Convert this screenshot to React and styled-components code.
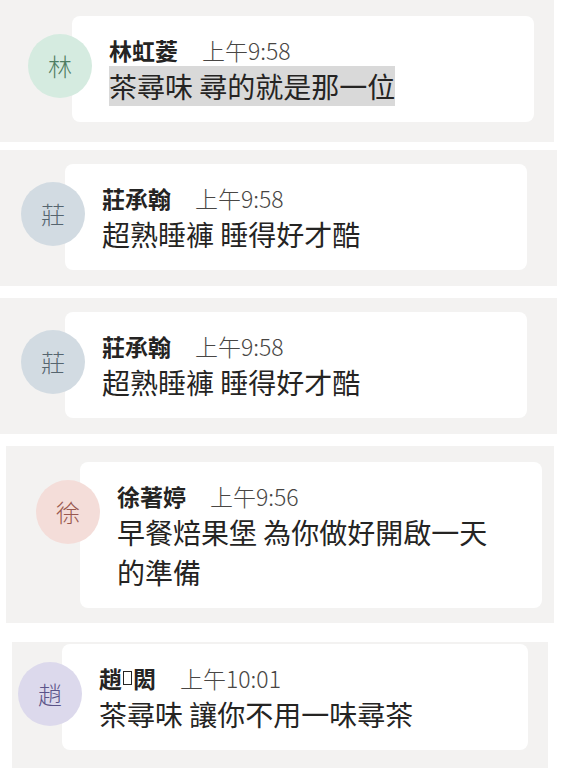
import React from "react";
import styled, { createGlobalStyle } from "styled-components";

const Global = createGlobalStyle`
  html, body { margin: 0; padding: 0; background: #ffffff; }
  body { font-family: "Noto Sans CJK TC", "Noto Sans", sans-serif; color: #252423; }
`;

const Page = styled.div`
  display: flex;
  flex-direction: column;
  width: 562px;
`;

const Panel = styled.section`
  display: flex;
  align-items: flex-start;
  box-sizing: border-box;
  background: #f3f2f1;
  width: ${(p) => p.$w}px;
  margin-top: ${(p) => p.$mt}px;
  margin-left: ${(p) => p.$ml}px;
  padding: ${(p) => p.$pad};
`;

const Avatar = styled.div`
  position: relative;
  z-index: 1;
  flex: 0 0 64px;
  width: 64px;
  height: 64px;
  margin-top: 18px;
  margin-right: -20px;
  border-radius: 50%;
  display: flex;
  align-items: center;
  justify-content: center;
  background: ${(p) => p.$bg};
  color: ${(p) => p.$fg};
  font-size: 24px;
  font-weight: 300;
  line-height: 1;
`;

const Card = styled.div`
  flex: 1;
  box-sizing: border-box;
  background: #ffffff;
  border-radius: 8px;
  padding: 18px 40px 16px 37px;
`;

const Header = styled.div`
  display: flex;
  align-items: baseline;
  gap: 24px;
  height: 32px;
  line-height: 32px;
  font-size: 23px;
`;

const Name = styled.span`
  font-weight: 700;
  color: #252423;
  display: inline-flex;
  align-items: center;
`;

const Time = styled.span`
  font-weight: 300;
  color: #484644;
`;

const Message = styled.div`
  font-size: 28px;
  line-height: 40px;
  font-weight: 400;
  color: #252423;
`;

const Selected = styled.span`
  background: #d9d9d9;
`;

const Tofu = styled.span`
  display: inline-block;
  box-sizing: border-box;
  width: 9px;
  height: 14px;
  border: 1px solid #252423;
  margin: 0 1px;
`;

const messages = [
  {
    panel: { w: 554, mt: 0, ml: 0, pad: "16px 20px 20px 28px" },
    initial: "林",
    bg: "#d5ebe0",
    fg: "#4f7d62",
    name: "林虹菱",
    time: "上午9:58",
    text: <Selected>茶尋味 尋的就是那一位</Selected>,
  },
  {
    panel: { w: 557, mt: 8, ml: 0, pad: "14px 30px 16px 21px" },
    initial: "莊",
    bg: "#d2dbe2",
    fg: "#56656f",
    name: "莊承翰",
    time: "上午9:58",
    text: "超熟睡褲 睡得好才酷",
  },
  {
    panel: { w: 557, mt: 12, ml: 0, pad: "14px 30px 16px 21px" },
    initial: "莊",
    bg: "#d2dbe2",
    fg: "#56656f",
    name: "莊承翰",
    time: "上午9:58",
    text: "超熟睡褲 睡得好才酷",
  },
  {
    panel: { w: 548, mt: 12, ml: 6, pad: "16px 12px 15px 30px" },
    initial: "徐",
    bg: "#f4ddd9",
    fg: "#99584f",
    name: "徐著婷",
    time: "上午9:56",
    text: "早餐焙果堡 為你做好開啟一天的準備",
  },
  {
    panel: { w: 536, mt: 19, ml: 12, pad: "2px 20px 18px 6px" },
    initial: "趙",
    bg: "#dcd9ec",
    fg: "#5b5489",
    name: (
      <>
        趙<Tofu />閎
      </>
    ),
    time: "上午10:01",
    text: "茶尋味 讓你不用一味尋茶",
  },
];

export default function App() {
  return (
    <>
      <Global />
      <Page>
        {messages.map((m, i) => (
          <Panel
            key={i}
            $w={m.panel.w}
            $mt={m.panel.mt}
            $ml={m.panel.ml}
            $pad={m.panel.pad}
          >
            <Avatar $bg={m.bg} $fg={m.fg}>
              {m.initial}
            </Avatar>
            <Card>
              <Header>
                <Name>{m.name}</Name>
                <Time>{m.time}</Time>
              </Header>
              <Message>{m.text}</Message>
            </Card>
          </Panel>
        ))}
      </Page>
    </>
  );
}
